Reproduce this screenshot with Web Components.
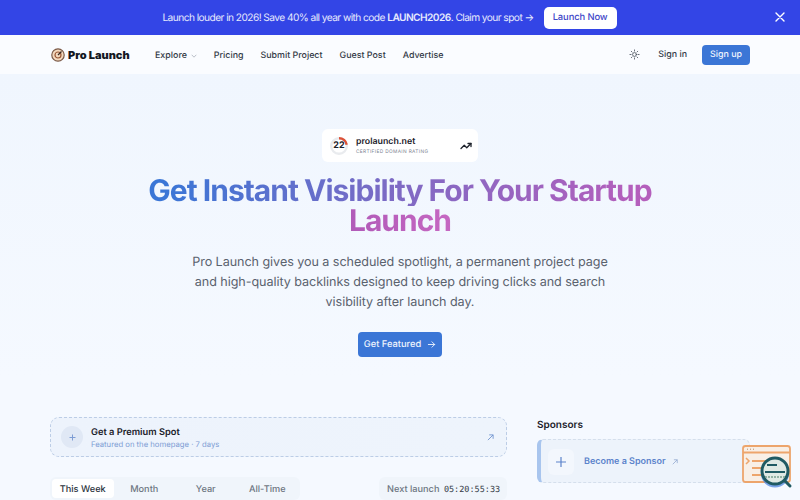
<!DOCTYPE html>
<html lang="en">
<head>
<meta charset="utf-8">
<title>Pro Launch</title>
<style>
  html, body { margin: 0; height: 500px; overflow: hidden; }
  body { font-family: Inter, "Noto Sans", sans-serif; background: #f3f8fe; color: #1c2430; text-rendering: geometricPrecision; }
</style>
</head>
<body>
<promo-banner>
  Launch louder in 2026! Save 40% all year with code <b>LAUNCH2026</b>. Claim your spot →
</promo-banner>
<site-nav></site-nav>
<hero-section></hero-section>
<launch-board></launch-board>
<help-widget></help-widget>

<script>
(function () {
  function define(name, html) {
    const template = document.createElement("template");
    template.innerHTML = html;
    customElements.define(name, class extends HTMLElement {
      constructor() {
        super();
        this.attachShadow({ mode: "open" }).appendChild(template.content.cloneNode(true));
      }
    });
  }

  define("promo-banner", `
  <style>
    :host { display: flex; align-items: center; justify-content: center; gap: 10px; position: relative; padding-right: 21px; box-sizing: border-box;
      height: 35px; background: #3345e6; color: #e6e9fd; font-size: 10.200px; letter-spacing: -0.57px; }
    a { display: block; background: #fff; color: #3f48c8; font-weight: 500; font-size: 9.400px; letter-spacing: -.1px;
      width: 73px; text-align: center; line-height: 22px; border-radius: 5px; }
    svg { position: absolute; right: 14px; top: 11px; }
    ::slotted(b) { font-weight: 600; }
  </style>
  <span><slot></slot></span><a>Launch Now</a>
  <svg width="12" height="12" viewBox="0 0 12 12" fill="none" stroke="#fff" stroke-width="1.400" stroke-linecap="round"><path d="M2 2l8 8M10 2l-8 8"/></svg>
  `);

  define("site-nav", `
  <style>
    :host { display: flex; align-items: center; height: 39px; padding: 0 50px 0 51px; background: #fafcff; font-size: 8.900px; color: #333a46; font-weight: 500; }
    .logo { display: flex; align-items: center; gap: 3px; font-size: 11px; font-weight: 700; color: #14181f; width: 104px; }
    nav { display: flex; gap: 17px; align-items: center; padding-top: 2px; }
    nav span { display: inline-flex; align-items: center; gap: 4px; }
    .end { margin-left: auto; display: flex; align-items: center; }
    .in { margin: 0 15px 0 18px; }
    .up { background: #3b76d6; color: #f0f5fd; line-height: 20px; width: 48px; text-align: center; border-radius: 4px; }
  </style>
  <div class="logo">
    <svg width="14" height="14" viewBox="0 0 14 14" fill="none"><circle cx="7" cy="7" r="6.200" fill="#f3d9be" stroke="#7a5a48" stroke-width="1.200"/><circle cx="7" cy="7" r="3" fill="none" stroke="#9b5a38" stroke-width="1.200"/><path d="M7 7l3.500-3.500" stroke="#3a2a22" stroke-width="1.200"/></svg>
    <b>Pro Launch</b>
  </div>
  <nav>
    <span>Explore <svg width="6" height="4" viewBox="0 0 6 4" fill="none" stroke="#a9b0ba" stroke-width=".8"><path d="M.7.8L3 3.200 5.300.8"/></svg></span>
    <span>Pricing</span><span>Submit Project</span><span>Guest Post</span><span>Advertise</span>
  </nav>
  <div class="end">
    <svg width="11" height="11" viewBox="0 0 24 24" fill="none" stroke="#4a525e" stroke-width="1.800" stroke-linecap="round"><circle cx="12" cy="12" r="4.200"/><path d="M12 2v2.500M12 19.500V22M2 12h2.500M19.500 12H22M4.900 4.900l1.800 1.800M17.300 17.300l1.800 1.800M4.900 19.100l1.800-1.800M17.300 6.700l1.800-1.800"/></svg>
    <span class="in">Sign in</span><span class="up">Sign up</span>
  </div>
  `);

  define("hero-section", `
  <style>
    :host { display: flex; flex-direction: column; align-items: center; padding-top: 55px; height: 303px; box-sizing: border-box;
      background: linear-gradient(#f0f6fe, #f5f9ff); }
    .dr { display: flex; align-items: center; width: 156px; height: 33px; box-sizing: border-box; padding: 0 6px 0 8px; background: #fff; border-radius: 6px; }
    .dr div { margin: 0 0 0 8px; flex: 1; }
    .dr b { display: block; font-size: 8.800px; font-weight: 600; color: #1d222b; line-height: 12px; }
    .dr small { display: block; font-size: 4.800px; letter-spacing: .35px; color: #7b8390; line-height: 8px; }
    .ring { position: relative; width: 18px; height: 18px; }
    .ring span { position: absolute; inset: 0; text-align: center; font-size: 9px; font-weight: 700; line-height: 18px; color: #1d222b; }
    h1 { margin: 14px 0 0; width: 520px; text-align: center; font-size: 30px; line-height: 30px; font-weight: 700; letter-spacing: -1px; }
    h1 span { display: block; -webkit-background-clip: text; background-clip: text; color: transparent; }
    .l1 { background-image: linear-gradient(90deg, #3b76d6 5%, #7f6ac4 50%, #b45fbc 95%); }
    .l2 { background-image: linear-gradient(90deg, #b05ab8 40%, #c668c2 60%); }
    p { margin: 17px 0 0; width: 430px; text-align: center; font-size: 12.600px; line-height: 20px; color: #5a626e; letter-spacing: -.06px; }
    a { margin-top: 19px; display: flex; align-items: center; gap: 6px; white-space: nowrap; background: #3b76d6; color: #eef4fd; font-size: 9.300px; font-weight: 500; height: 25px; width: 84px; box-sizing: border-box; justify-content: center; border-radius: 4px; }
  </style>
  <div class="dr">
    <span class="ring">
      <svg width="18" height="18" viewBox="0 0 18 18" fill="none" stroke-width="2.400"><circle cx="9" cy="9" r="7.800" stroke="#e9ebee"/><path d="M9 1.200a7.800 7.800 0 0 1 7.700 6.500" stroke="#dc5238"/></svg>
      <span>22</span>
    </span>
    <div><b>prolaunch.net</b><small>CERTIFIED DOMAIN RATING</small></div>
    <svg width="12" height="12" viewBox="0 0 24 24" fill="none" stroke="#1d222b" stroke-width="2.600" stroke-linecap="round" stroke-linejoin="round"><path d="M22 7l-8.500 8.500-5-5L2 17"/><path d="M16 7h6v6"/></svg>
  </div>
  <h1><span class="l1">Get Instant Visibility For Your Startup</span><span class="l2">Launch</span></h1>
  <p>Pro Launch gives you a scheduled spotlight, a permanent project page and high-quality backlinks designed to keep driving clicks and search visibility after launch day.</p>
  <a>Get Featured <svg width="9" height="9" viewBox="0 0 10 10" fill="none" stroke="#eef4fd" stroke-width="1" stroke-linecap="round" stroke-linejoin="round"><path d="M1.500 5h7M5.500 2l3 3-3 3"/></svg></a>
  `);

  define("launch-board", `
  <style>
    :host { display: grid; grid-template-columns: 457px 213px; gap: 30px; padding: 40px 50px 0; background: #f5f9ff; }
    .spot { display: flex; align-items: center; height: 40px; box-sizing: border-box; padding: 0 12px 0 10px; border: 1px dashed #bccde6; border-radius: 9px; background: linear-gradient(90deg, #edf3fc, #eef4fc); }
    .plus { width: 22px; height: 22px; border-radius: 50%; background: #e0e8f5; display: flex; align-items: center; justify-content: center; margin-right: 8px; }
    .spot div { padding-top: 2px; }
    .spot b { display: block; font-size: 9.300px; font-weight: 600; color: #1a2029; line-height: 13px; }
    .spot small { display: block; font-size: 7.700px; color: #7e9dd4; line-height: 11px; }
    .spot > svg { margin-left: auto; }
    .row { display: flex; justify-content: space-between; margin-top: 20px; font-size: 9.200px; font-weight: 500; color: #6d7582; }
    .tabs { display: flex; background: #f0f5fb; border-radius: 6px; width: 250px; height: 23px; padding: 2px; box-sizing: border-box; }
    .tabs span { line-height: 21px; text-align: center; width: 62px; height: 19px; }
    .tabs .on { background: #fff; color: #2a313c; border-radius: 4px; }
    .next { background: #f0f5fb; border-radius: 6px; height: 23px; line-height: 25px; padding: 0 8px; width: 128px; box-sizing: border-box; white-space: nowrap; text-align: right; }
    .next code { font: 500 8.500px "DejaVu Sans Mono", "Liberation Mono", monospace; color: #333a46; margin-left: 2px; }
    h2 { margin: 1px 0 0; font-size: 10px; font-weight: 600; line-height: 14px; color: #1a2029; }
    .sp { display: flex; align-items: center; margin-top: 7px; height: 44px; border: 1px dashed #d5dfec; border-left: 4px solid #a8c5ee; border-radius: 6px; background: #edf3fb; padding: 1px 0 0 7px; box-sizing: border-box; width: 213px; color: #5c83cb; font-size: 9px; font-weight: 600; }
    .add { width: 26px; height: 26px; border-radius: 6px; background: #f3f7fd; display: flex; align-items: center; justify-content: center; margin-right: 10px; }
    .sp svg.o { margin-left: 6px; }
  </style>
  <div>
    <div class="spot">
      <span class="plus"><svg width="7" height="7" viewBox="0 0 7 7" stroke="#7e9dd4" stroke-width="1"><path d="M3.500 .5v6M.5 3.500h6"/></svg></span>
      <div><b>Get a Premium Spot</b><small>Featured on the homepage · 7 days</small></div>
      <svg width="7" height="7" viewBox="0 0 8 8" fill="none" stroke="#6f92cf" stroke-width="1"><path d="M1 7l6-6M2.500 1H7v4.500"/></svg>
    </div>
    <div class="row">
      <div class="tabs"><span class="on">This Week</span><span>Month</span><span>Year</span><span>All-Time</span></div>
      <div class="next">Next launch <code>05:20:55:33</code></div>
    </div>
  </div>
  <div>
    <h2>Sponsors</h2>
    <div class="sp">
      <span class="add"><svg width="10" height="10" viewBox="0 0 10 10" stroke="#5c83cb" stroke-width="1.200"><path d="M5 0v10M0 5h10"/></svg></span>
      Become a Sponsor
      <svg class="o" width="6" height="6" viewBox="0 0 8 8" fill="none" stroke="#8fa6cf" stroke-width="1"><path d="M1 7l6-6M2.500 1H7v4.500"/></svg>
    </div>
  </div>
  `);

  define("help-widget", `
  <style>
    :host { position: fixed; left: 741px; top: 444px; width: 52px; height: 48px; display: block; }
  </style>
  <svg width="52" height="48" viewBox="0 0 52 48" fill="none">
    <rect x="2" y="2" width="47" height="36" rx="2.500" fill="#f8efe6" stroke="#eda56c" stroke-width="1.800"/>
    <path d="M2 8.500h47" stroke="#eda56c" stroke-width="1.800"/>
    <path d="M6 5.200h1M9 5.200h1M12 5.200h1" stroke="#b98a68"/>
    <path d="M5 14l3 3-3 3" stroke="#eda56c" stroke-width="1.500"/>
    <path d="M11 17h14M11 24h14M11 31h14" stroke="#eda56c" stroke-width="1.800"/>
    <circle cx="34" cy="29.500" r="14" fill="#4f86e0" opacity=".75"/>
    <circle cx="34" cy="27" r="13" fill="#dfe9e4" stroke="#1f5a63" stroke-width="3"/>
    <path d="M26 21h10M24 28h20" stroke="#1f5a63" stroke-width="2"/>
    <path d="M24 33h20" stroke="#7aa08f" stroke-width="1.500" stroke-dasharray="2 1"/>
    <path d="M44 37l5 5" stroke="#1f5a63" stroke-width="3" stroke-linecap="round"/>
  </svg>
  `);
})();
</script>
</body>
</html>
